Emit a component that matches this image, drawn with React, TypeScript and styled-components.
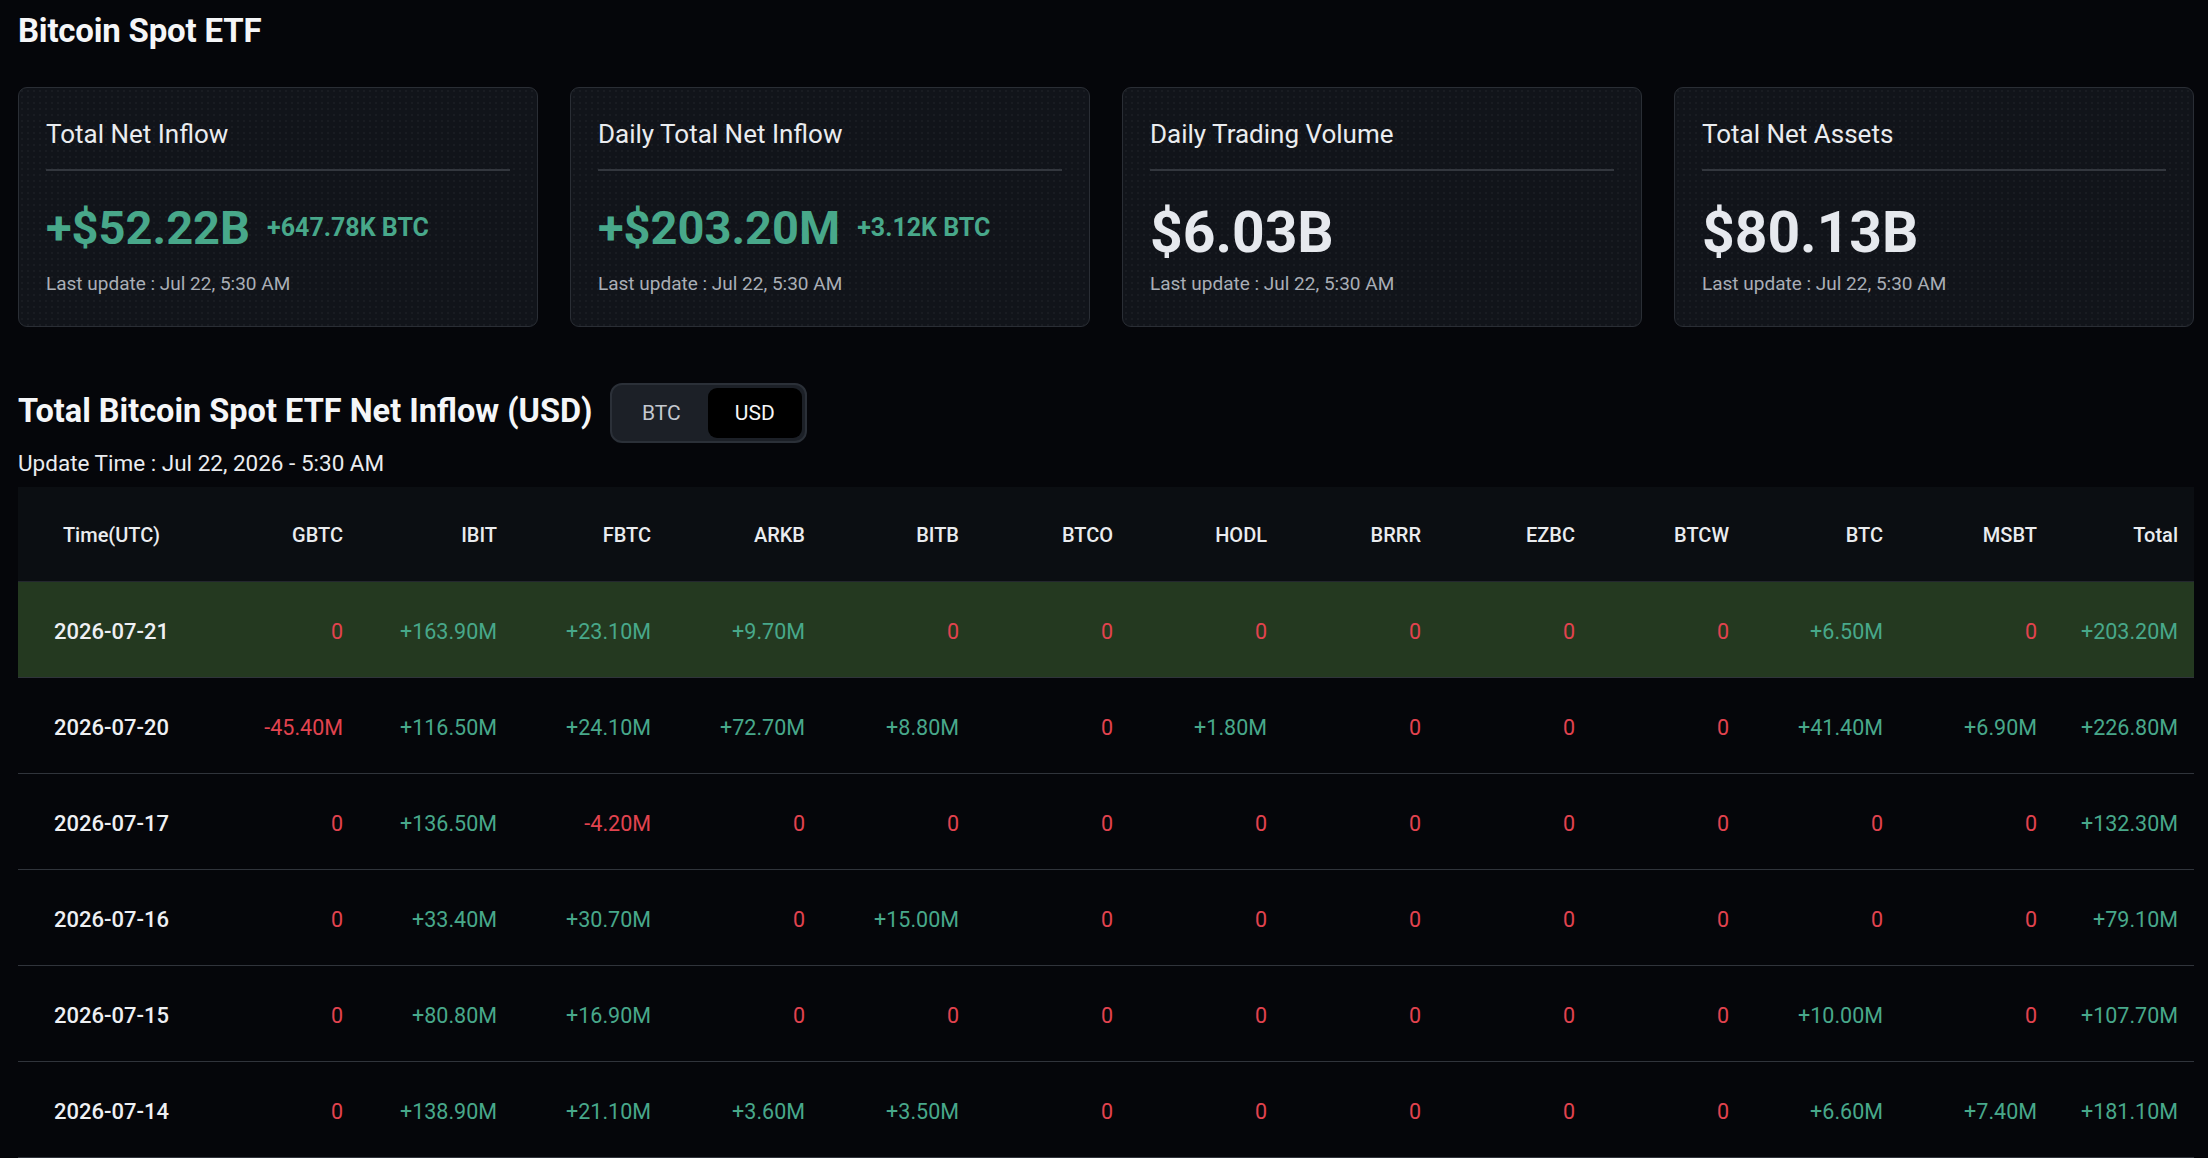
import React, { useState } from 'react';
import styled, { createGlobalStyle, css } from 'styled-components';

const GREEN = '#48a88a';
const RED = '#e2434f';

const GlobalStyle = createGlobalStyle`
    html, body {
        margin: 0;
        padding: 0;
        background: #05060a;
        color: #eaecef;
        font-family: Roboto, "Liberation Sans", Arial, sans-serif;
    }
    * {
        box-sizing: border-box;
    }
`;

const Page = styled.main`
    padding: 0 14px 0 18px;
    min-height: 100vh;
`;

const PageTitle = styled.h1`
    margin: 11px 0 36px;
    font-size: 33px;
    line-height: 40px;
    font-weight: 700;
    letter-spacing: -0.2px;
    color: #f5f6f8;
`;

const CardGrid = styled.section`
    display: grid;
    grid-template-columns: repeat(4, 1fr);
    gap: 32px;
`;

const StatCard = styled.div`
    height: 240px;
    padding: 31px 27px 0;
    border: 1px solid #2a2e35;
    border-radius: 9px;
    background-color: #11141a;
    background-image: radial-gradient(rgba(255, 255, 255, 0.035) 1px, transparent 1px);
    background-size: 6px 6px;
`;

const CardLabel = styled.div`
    font-size: 26px;
    line-height: 31px;
    color: #eaecef;
`;

const Divider = styled.div`
    height: 2px;
    margin-top: 19px;
    background: #33373e;
`;

const ValueRow = styled.div`
    display: flex;
    align-items: flex-start;
    gap: 17px;
    height: 58px;
    margin-top: 33px;
`;

const MainValue = styled.span<{ $up?: boolean }>`
    font-weight: 700;
    line-height: 1;
    ${({ $up }) =>
        $up
            ? css`
                  font-size: 47px;
                  color: ${GREEN};
              `
            : css`
                  font-size: 57px;
                  color: #e6e9ee;
              `}
`;

const SubValue = styled.span`
    margin-top: 11px;
    font-size: 25px;
    line-height: 1;
    font-weight: 700;
    color: ${GREEN};
`;

const LastUpdate = styled.div`
    margin-top: 10px;
    font-size: 19px;
    line-height: 24px;
    color: #a9aeb6;
`;

const SectionHeader = styled.div`
    display: flex;
    align-items: center;
    gap: 17px;
    margin-top: 56px;
`;

const SectionTitle = styled.h2`
    margin: 0;
    padding-bottom: 5px;
    font-size: 32.5px;
    line-height: 40px;
    font-weight: 700;
    color: #f5f6f8;
`;

const Toggle = styled.div`
    display: flex;
    width: 197px;
    height: 60px;
    padding: 3px;
    border: 2px solid #2b3038;
    border-radius: 12px;
    background: #1c2027;
`;

const ToggleOption = styled.button<{ $active?: boolean }>`
    flex: 1;
    border: 0;
    border-radius: 9px;
    font-family: inherit;
    font-size: 21px;
    cursor: pointer;
    background: ${({ $active }) => ($active ? '#000000' : 'transparent')};
    color: ${({ $active }) => ($active ? '#f5f6f8' : '#c4c8cf')};
`;

const UpdateTime = styled.div`
    margin-top: 7px;
    font-size: 22.5px;
    line-height: 26px;
    color: #eaecef;
`;

const Table = styled.div`
    margin-top: 11px;
`;

const gridColumns = css`
    display: grid;
    grid-template-columns: 187px repeat(12, 154px) 1fr;
    align-items: center;
`;

const HeaderRow = styled.div`
    ${gridColumns};
    height: 95px;
    padding-top: 2px;
    background: #0b0e12;
    border-bottom: 1px solid #23272e;
`;

const DataRow = styled.div<{ $highlight?: boolean }>`
    ${gridColumns};
    height: 96px;
    padding-top: 4px;
    border-bottom: 1px solid #30343b;
    background: ${({ $highlight }) => ($highlight ? '#243920' : 'transparent')};
`;

const HeadCell = styled.div<{ $center?: boolean }>`
    padding-right: ${({ $center }) => ($center ? '0' : '16px')};
    text-align: ${({ $center }) => ($center ? 'center' : 'right')};
    font-size: 20px;
    font-weight: 500;
    color: #eaecef;
`;

const DateCell = styled.div`
    text-align: center;
    font-size: 22px;
    font-weight: 500;
    color: #eef0f3;
`;

const ValueCell = styled.div<{ $up: boolean }>`
    padding-right: 16px;
    text-align: right;
    font-size: 21.5px;
    color: ${({ $up }) => ($up ? GREEN : RED)};
`;

const funds = ['GBTC', 'IBIT', 'FBTC', 'ARKB', 'BITB', 'BTCO', 'HODL', 'BRRR', 'EZBC', 'BTCW', 'BTC', 'MSBT', 'Total'];

const rows: { date: string; values: string[] }[] = [
    { date: '2026-07-21', values: ['0', '+163.90M', '+23.10M', '+9.70M', '0', '0', '0', '0', '0', '0', '+6.50M', '0', '+203.20M'] },
    { date: '2026-07-20', values: ['-45.40M', '+116.50M', '+24.10M', '+72.70M', '+8.80M', '0', '+1.80M', '0', '0', '0', '+41.40M', '+6.90M', '+226.80M'] },
    { date: '2026-07-17', values: ['0', '+136.50M', '-4.20M', '0', '0', '0', '0', '0', '0', '0', '0', '0', '+132.30M'] },
    { date: '2026-07-16', values: ['0', '+33.40M', '+30.70M', '0', '+15.00M', '0', '0', '0', '0', '0', '0', '0', '+79.10M'] },
    { date: '2026-07-15', values: ['0', '+80.80M', '+16.90M', '0', '0', '0', '0', '0', '0', '0', '+10.00M', '0', '+107.70M'] },
    { date: '2026-07-14', values: ['0', '+138.90M', '+21.10M', '+3.60M', '+3.50M', '0', '0', '0', '0', '0', '+6.60M', '+7.40M', '+181.10M'] },
];

const stats = [
    { label: 'Total Net Inflow', value: '+$52.22B', sub: '+647.78K BTC' },
    { label: 'Daily Total Net Inflow', value: '+$203.20M', sub: '+3.12K BTC' },
    { label: 'Daily Trading Volume', value: '$6.03B' },
    { label: 'Total Net Assets', value: '$80.13B' },
];

const App: React.FC = () => {
    const [unit, setUnit] = useState<'BTC' | 'USD'>('USD');

    return (
        <>
            <GlobalStyle />
            <Page>
                <PageTitle>Bitcoin Spot ETF</PageTitle>
                <CardGrid>
                    {stats.map((s) => (
                        <StatCard key={s.label}>
                            <CardLabel>{s.label}</CardLabel>
                            <Divider />
                            <ValueRow>
                                <MainValue $up={!!s.sub}>{s.value}</MainValue>
                                {s.sub && <SubValue>{s.sub}</SubValue>}
                            </ValueRow>
                            <LastUpdate>Last update : Jul 22, 5:30 AM</LastUpdate>
                        </StatCard>
                    ))}
                </CardGrid>

                <SectionHeader>
                    <SectionTitle>Total Bitcoin Spot ETF Net Inflow (USD)</SectionTitle>
                    <Toggle>
                        <ToggleOption $active={unit === 'BTC'} onClick={() => setUnit('BTC')}>BTC</ToggleOption>
                        <ToggleOption $active={unit === 'USD'} onClick={() => setUnit('USD')}>USD</ToggleOption>
                    </Toggle>
                </SectionHeader>
                <UpdateTime>Update Time : Jul 22, 2026 - 5:30 AM</UpdateTime>

                <Table>
                    <HeaderRow>
                        <HeadCell $center>Time(UTC)</HeadCell>
                        {funds.map((f) => (
                            <HeadCell key={f}>{f}</HeadCell>
                        ))}
                    </HeaderRow>
                    {rows.map((r, i) => (
                        <DataRow key={r.date} $highlight={i === 0}>
                            <DateCell>{r.date}</DateCell>
                            {r.values.map((v, j) => (
                                <ValueCell key={funds[j]} $up={v.startsWith('+')}>{v}</ValueCell>
                            ))}
                        </DataRow>
                    ))}
                </Table>
            </Page>
        </>
    );
};

export default App;
